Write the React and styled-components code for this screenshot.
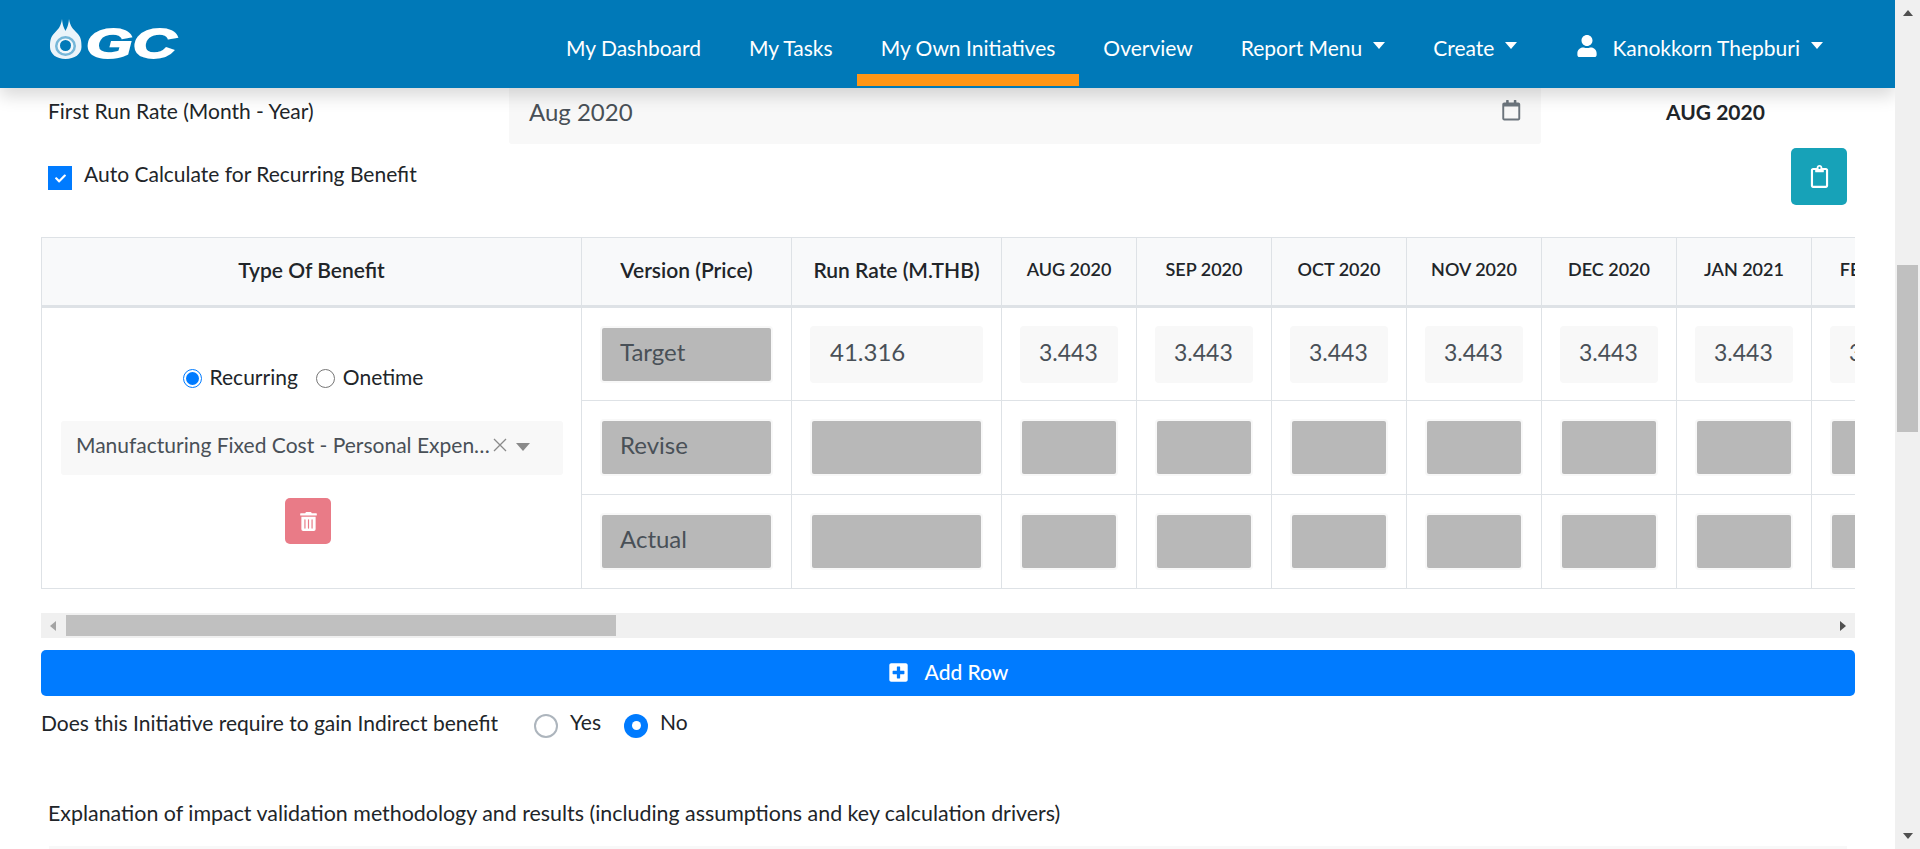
import React from "react";
import styled, { createGlobalStyle } from "styled-components";
import {
  FaUser,
  FaRegCalendar,
  FaRegClipboard,
  FaTrashAlt,
  FaPlusSquare,
  FaCheck,
} from "react-icons/fa";

const GlobalStyle = createGlobalStyle`
  html, body {
    margin: 0;
    height: 100%;
    overflow: hidden;
    background: #fff;
  }
  body {
    font-family: Lato, "Noto Sans", sans-serif;
    color: #212529;
    font-size: 21px;
  }
  * {
    box-sizing: border-box;
  }
`;

const Window = styled.div`
  display: flex;
  height: 849px;
  overflow: hidden;
`;
const Page = styled.div`
  width: 1895px;
  flex-shrink: 0;
  overflow: hidden;
`;
const Navbar = styled.nav`
  position: relative;
  z-index: 5;
  display: flex;
  align-items: stretch;
  height: 88px;
  padding-left: 50px;
  background: #0079b8;
  box-shadow: 0 8px 16px rgba(0, 0, 0, 0.15);
`;
const Logo = styled.svg`
  margin-top: 19px;
  width: 128px;
  height: 40px;
  overflow: visible;
`;
const NavList = styled.div`
  display: flex;
  margin-left: 364px;
`;
const NavItem = styled.a`
  display: flex;
  align-items: center;
  height: 86px;
  padding: 20px 24px 0;
  margin-left: ${(props) => props.$gap || 0}px;
  color: #fff;
  font-size: 21px;
  white-space: nowrap;
  border-bottom: 12px solid ${(props) => (props.$active ? "#ff9616" : "transparent")};
`;
const Caret = styled.i`
  width: 0;
  height: 0;
  margin: -3px 0 0 11px;
  border-top: 7px solid #fff;
  border-left: 6.5px solid transparent;
  border-right: 6.5px solid transparent;
`;
const UserIcon = styled(FaUser)`
  margin: -2px 14px 0 0;
  font-size: 22px;
`;

const Main = styled.main`
  padding: 0 40px 0 41px;
`;
const RateRow = styled.div`
  display: flex;
  height: 56px;
`;
const RateLabel = styled.label`
  width: 468px;
  padding: 11px 0 0 7px;
  line-height: 24px;
`;
const DateField = styled.div`
  display: flex;
  justify-content: space-between;
  width: 1032px;
  padding: 10px 20px 0;
  background: #f8f8f8;
  color: #495057;
  font-size: 24px;
  line-height: 28px;
  border-radius: 0 0 3px 3px;
`;
const CalendarIcon = styled(FaRegCalendar)`
  margin-top: 2px;
  font-size: 20.5px;
  color: #6c757d;
`;
const MonthLabel = styled.strong`
  margin: 10px 0 0 125px;
  font-size: 21px;
  line-height: 28px;
  font-weight: 700;
`;
const AutoRow = styled.div`
  display: flex;
  justify-content: space-between;
  align-items: flex-start;
  padding: 4px 8px 32px 7px;
`;
const CheckLabel = styled.label`
  display: flex;
  align-items: flex-start;
  gap: 12px;
  padding-top: 14px;
  line-height: 24px;
`;
const CheckBox = styled.span`
  display: flex;
  align-items: center;
  justify-content: center;
  width: 24px;
  height: 24px;
  margin-top: 4px;
  background: #007bff;
  color: #fff;
  font-size: 11px;
`;
const CopyButton = styled.button`
  display: flex;
  align-items: center;
  justify-content: center;
  width: 56px;
  height: 57px;
  padding: 0;
  border: 0;
  border-radius: 5px;
  background: #17a2b8;
  color: #fff;
  font-size: 23px;
`;

const TableClip = styled.div`
  width: 1814px;
  overflow: hidden;
`;
const BenefitTable = styled.table`
  table-layout: fixed;
  width: 5820px;
  border-collapse: collapse;
`;
const HeadCell = styled.th`
  height: 69px;
  padding: 0 0 5px;
  background: #f8f9fa;
  border: 1px solid #dee2e6;
  border-bottom: 3px solid #dee2e6;
  font-size: ${(props) => (props.$small ? "18px" : "21px")};
  font-weight: 600;
  text-align: center;
  white-space: nowrap;
`;
const Cell = styled.td`
  height: 94px;
  padding: 0 18px;
  border: 1px solid #dee2e6;
  vertical-align: middle;
`;
const TypeCell = styled(Cell)`
  padding: 60px 18px 0 19px;
  vertical-align: top;
`;
const TypeOptions = styled.div`
  display: flex;
  justify-content: center;
  align-items: center;
  height: 20px;
  padding-right: 18px;
`;
const RadioText = styled.span`
  margin: -2px 18px 0 8px;
  line-height: 20px;
  &:last-child {
    margin-right: 0;
  }
`;
const SmallRadio = styled.span`
  display: flex;
  align-items: center;
  justify-content: center;
  width: 19px;
  height: 19px;
  border-radius: 50%;
  border: 1px solid ${(props) => (props.$checked ? "#007bff" : "#767676")};
  &::after {
    content: "";
    display: ${(props) => (props.$checked ? "block" : "none")};
    width: 13px;
    height: 13px;
    border-radius: 50%;
    background: #007bff;
  }
`;
const TypeSelect = styled.div`
  display: flex;
  align-items: center;
  height: 54px;
  margin-top: 33px;
  padding: 0 0 0 15px;
  background: #f8f8f8;
  border-radius: 3px;
  color: #495057;
`;
const SelectText = styled.span`
  flex: none;
  width: 414px;
  padding-bottom: 8px;
  white-space: nowrap;
  overflow: hidden;
  text-overflow: ellipsis;
`;
const ClearMark = styled.svg`
  width: 14px;
  height: 14px;
  margin: -6px 9px 0 3px;
  stroke: #8a8a8a;
`;
const SelectArrow = styled.i`
  width: 0;
  height: 0;
  margin-top: -3px;
  border-top: 8px solid #8a8a8a;
  border-left: 7.5px solid transparent;
  border-right: 7.5px solid transparent;
`;
const TrashButton = styled.button`
  display: flex;
  align-items: center;
  justify-content: center;
  width: 46px;
  height: 46px;
  margin: 23px 0 0 224px;
  padding: 0;
  border: 0;
  border-radius: 5px;
  background: #e97b87;
  color: #fff;
  font-size: 19px;
`;
const Field = styled.div`
  height: 57px;
  padding: 0 ${(props) => (props.$compact ? 17 : 18)}px;
  border: 2px solid #f8f8f8;
  border-radius: 4px;
  background: ${(props) => (props.$filled ? "#b8b8b8" : "#f8f8f8")};
  color: #495057;
  font-size: ${(props) => (props.$compact ? "23px" : "24px")};
  line-height: ${(props) => (props.$compact ? 49 : 47)}px;
  white-space: nowrap;
  overflow: hidden;
`;

const TableScrollbar = styled.div`
  display: flex;
  align-items: center;
  justify-content: space-between;
  width: 1814px;
  height: 25px;
  margin-top: 24px;
  padding: 0 9px;
  background: #f0f0f0;
`;
const TableScrollThumb = styled.div`
  width: 550px;
  height: 21px;
  margin-left: 10px;
  margin-right: auto;
  background: #c0c0c0;
`;
const SideArrow = styled.i`
  width: 0;
  height: 0;
  border-top: 5.5px solid transparent;
  border-bottom: 5.5px solid transparent;
  border-left: ${(props) => (props.$right ? "6px solid #505050" : "0")};
  border-right: ${(props) => (props.$right ? "0" : "6px solid #a3a3a3")};
`;

const AddRowButton = styled.button`
  display: flex;
  align-items: center;
  justify-content: center;
  gap: 16px;
  width: 1814px;
  height: 46px;
  margin-top: 12px;
  padding: 0 0 3px;
  border: 0;
  border-radius: 5px;
  background: #007bff;
  color: #fff;
  font-family: inherit;
  font-size: 21px;
  font-weight: 500;
`;
const AddIcon = styled(FaPlusSquare)`
  margin-top: 2px;
  font-size: 21px;
`;
const IndirectRow = styled.div`
  display: flex;
  align-items: center;
  height: 30px;
  margin-top: 12px;
  line-height: 24px;
`;
const IndirectLabel = styled.span`
  width: 493px;
`;
const LargeRadio = styled.span`
  display: flex;
  align-items: center;
  justify-content: center;
  width: 24px;
  height: 24px;
  margin-top: 5px;
  border-radius: 50%;
  border: ${(props) => (props.$checked ? "0" : "2px solid #adb5bd")};
  background: ${(props) => (props.$checked ? "#007bff" : "#fff")};
  &::after {
    content: "";
    display: ${(props) => (props.$checked ? "block" : "none")};
    width: 9px;
    height: 9px;
    border-radius: 50%;
    background: #fff;
  }
`;
const LargeRadioText = styled.span`
  margin: -3px 23px 0 12px;
`;
const ExplainBlock = styled.div`
  padding: 63px 8px 0 7px;
`;
const ExplainLabel = styled.label`
  display: block;
  font-size: 21.4px;
  line-height: 24px;
`;
const ExplainField = styled.div`
  width: 1798px;
  height: 60px;
  margin: 21px 0 0 1px;
  background: #f8f8f8;
`;

const PageScrollbar = styled.aside`
  display: flex;
  flex-direction: column;
  align-items: center;
  justify-content: space-between;
  width: 25px;
  height: 849px;
  padding: 10px 0;
  background: #f0f0f0;
`;
const ScrollThumb = styled.div`
  width: 21px;
  height: 167px;
  margin-top: 249px;
  margin-bottom: auto;
  background: #c0c0c0;
`;
const ScrollArrow = styled.i`
  width: 0;
  height: 0;
  border-left: 5.5px solid transparent;
  border-right: 5.5px solid transparent;
  border-top: ${(props) => (props.$down ? "6px solid #505050" : "0")};
  border-bottom: ${(props) => (props.$down ? "0" : "6px solid #505050")};
`;

const monthNames = ["JAN", "FEB", "MAR", "APR", "MAY", "JUN", "JUL", "AUG", "SEP", "OCT", "NOV", "DEC"];
// the table runs for three years from the first run rate month
const months = Array.from({ length: 36 }, (_, i) => {
  const index = 7 + i;
  return `${monthNames[index % 12]} ${2020 + Math.floor(index / 12)}`;
});
const versions = ["Target", "Revise", "Actual"];

function GcLogo() {
  return (
    <Logo viewBox="0 0 128 40" aria-label="GC">
      <path
        d="M12 0c.5 6 2 9 3.5 12 1.5-3 3-6 3.5-12 1 7 4 10 8 14 4 4 4.500 8 4.500 14 0 7-7 12-16 12S0 35 0 28c0-6 .5-10 4.500-14 4-4 6.500-7 7.500-14z"
        fill="#fff"
        fillOpacity="0.92"
      />
      <ellipse cx="15.500" cy="27" rx="10.500" ry="10" fill="#0079b8" fillOpacity="0.5" />
      <ellipse cx="15.500" cy="27" rx="8" ry="7.500" fill="#fff" fillOpacity="0.9" />
      <ellipse cx="15.500" cy="26.500" rx="5.500" ry="5.500" fill="#0079b8" />
      <text
        x="36"
        y="39"
        fill="#fff"
        stroke="#fff"
        strokeWidth="1.8"
        fontFamily="Liberation Sans, sans-serif"
        fontSize="43"
        fontWeight="700"
        fontStyle="italic"
        textLength="90"
        lengthAdjust="spacingAndGlyphs"
      >
        GC
      </text>
    </Logo>
  );
}

function App() {
  return (
    <Window>
      <GlobalStyle />
      <Page>
        <Navbar>
          <GcLogo />
          <NavList>
            <NavItem>My Dashboard</NavItem>
            <NavItem>My Tasks</NavItem>
            <NavItem $active>My Own Initiatives</NavItem>
            <NavItem>Overview</NavItem>
            <NavItem>
              Report Menu
              <Caret />
            </NavItem>
            <NavItem>
              Create
              <Caret />
            </NavItem>
            <NavItem $gap={11}>
              <UserIcon />
              Kanokkorn Thepburi
              <Caret />
            </NavItem>
          </NavList>
        </Navbar>
        <Main>
          <RateRow>
            <RateLabel>First Run Rate (Month - Year)</RateLabel>
            <DateField>
              Aug 2020
              <CalendarIcon />
            </DateField>
            <MonthLabel>AUG 2020</MonthLabel>
          </RateRow>
          <AutoRow>
            <CheckLabel>
              <CheckBox>
                <FaCheck />
              </CheckBox>
              Auto Calculate for Recurring Benefit
            </CheckLabel>
            <CopyButton>
              <FaRegClipboard />
            </CopyButton>
          </AutoRow>
          <TableClip>
            <BenefitTable>
              <colgroup>
                <col width="540" />
                <col width="210" />
                <col width="210" />
                {months.map((m) => (
                  <col key={m} width="135" />
                ))}
              </colgroup>
              <thead>
                <tr>
                  <HeadCell>Type Of Benefit</HeadCell>
                  <HeadCell>Version (Price)</HeadCell>
                  <HeadCell>Run Rate (M.THB)</HeadCell>
                  {months.map((m) => (
                    <HeadCell key={m} $small>
                      {m}
                    </HeadCell>
                  ))}
                </tr>
              </thead>
              <tbody>
                {versions.map((version, row) => (
                  <tr key={version}>
                    {row === 0 && (
                      <TypeCell rowSpan={3}>
                        <TypeOptions>
                          <SmallRadio $checked />
                          <RadioText>Recurring</RadioText>
                          <SmallRadio />
                          <RadioText>Onetime</RadioText>
                        </TypeOptions>
                        <TypeSelect>
                          <SelectText>Manufacturing Fixed Cost - Personal Expense</SelectText>
                          <ClearMark viewBox="0 0 14 14">
                            <path d="M1 1l12 12M13 1L1 13" strokeWidth="1.3" />
                          </ClearMark>
                          <SelectArrow />
                        </TypeSelect>
                        <TrashButton>
                          <FaTrashAlt />
                        </TrashButton>
                      </TypeCell>
                    )}
                    <Cell>
                      <Field $filled>{version}</Field>
                    </Cell>
                    <Cell>
                      <Field $filled={row > 0}>{row === 0 && "41.316"}</Field>
                    </Cell>
                    {months.map((m, i) => (
                      <Cell key={m}>
                        <Field $compact $filled={row > 0}>
                          {row === 0 && i < 12 && "3.443"}
                        </Field>
                      </Cell>
                    ))}
                  </tr>
                ))}
              </tbody>
            </BenefitTable>
          </TableClip>
          <TableScrollbar>
            <SideArrow />
            <TableScrollThumb />
            <SideArrow $right />
          </TableScrollbar>
          <AddRowButton>
            <AddIcon />
            Add Row
          </AddRowButton>
          <IndirectRow>
            <IndirectLabel>Does this Initiative require to gain Indirect benefit</IndirectLabel>
            <LargeRadio />
            <LargeRadioText>Yes</LargeRadioText>
            <LargeRadio $checked />
            <LargeRadioText>No</LargeRadioText>
          </IndirectRow>
          <ExplainBlock>
            <ExplainLabel>
              Explanation of impact validation methodology and results (including assumptions and key
              calculation drivers)
            </ExplainLabel>
            <ExplainField />
          </ExplainBlock>
        </Main>
      </Page>
      <PageScrollbar>
        <ScrollArrow />
        <ScrollThumb />
        <ScrollArrow $down />
      </PageScrollbar>
    </Window>
  );
}

export default App;
